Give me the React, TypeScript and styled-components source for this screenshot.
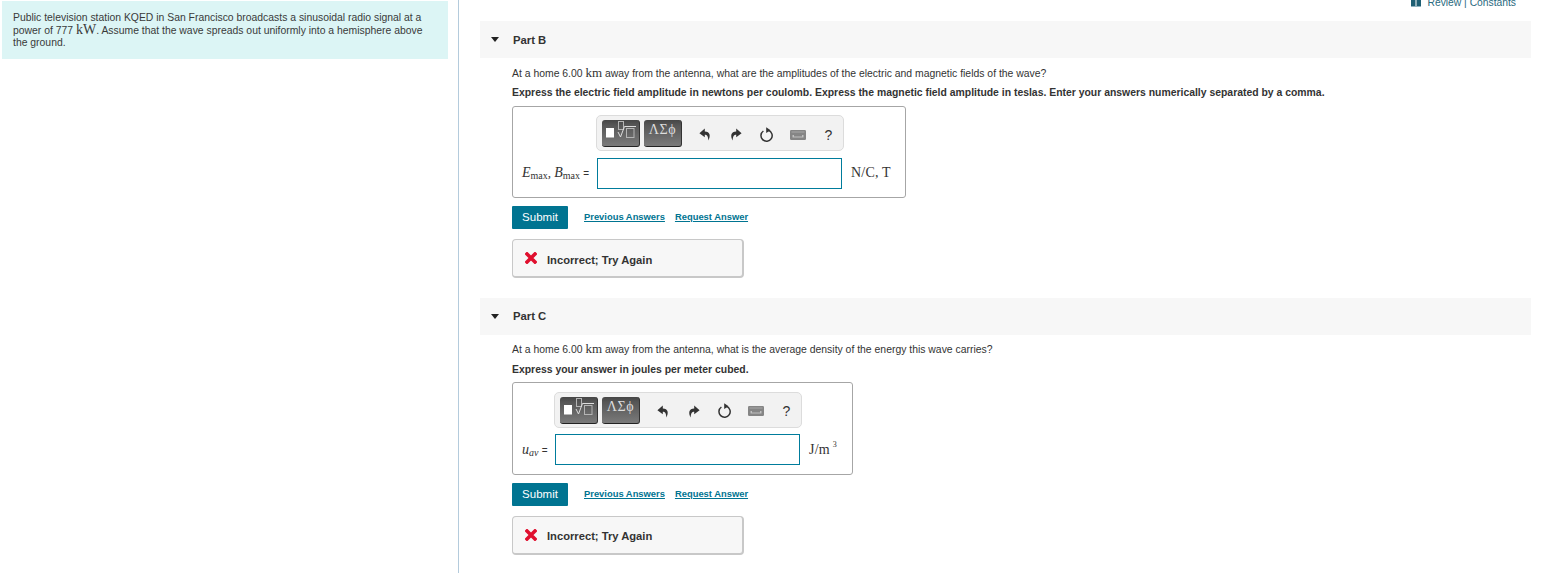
import { createGlobalStyle } from "styled-components";
import styled from "styled-components";

const GlobalStyle = createGlobalStyle`
  html, body {
    margin: 0;
    padding: 0;
    height: 573px;
    overflow: hidden;
    background: #fff;
  }
  body {
    font-family: "Liberation Sans", Arial, sans-serif;
    color: #333;
  }
`;

function UndoIcon() {
  return (
    <svg width="12" height="13" viewBox="0 0 12 13">
      <path d="M5.8 0.6 L0.4 5.2 L5.8 9.2 V6.8 C7.8 6.8 9 7.8 9.4 12.4 C11.8 8 11.2 3.6 5.8 3.5 Z" fill="#333" />
    </svg>
  );
}

function RedoIcon() {
  return (
    <svg width="12" height="13" viewBox="0 0 12 13">
      <path d="M6.2 0.6 L11.6 5.2 L6.2 9.2 V6.8 C4.2 6.8 3 7.8 2.6 12.4 C0.2 8 0.8 3.6 6.2 3.5 Z" fill="#333" />
    </svg>
  );
}

function ResetIcon() {
  return (
    <svg width="14" height="16" viewBox="0 0 14 16">
      <path d="M8.6 3.4 A5.6 5.6 0 1 1 3.4 4" fill="none" stroke="#333" strokeWidth="1.5" />
      <path d="M6.2 0.2 L10.6 3.3 L6.2 6 Z" fill="#333" />
    </svg>
  );
}

function KeyboardIcon() {
  return (
    <svg width="16" height="10" viewBox="0 0 16 10">
      <rect x="0" y="0" width="16" height="10" rx="1.2" fill="#858585" />
      <rect x="1.5" y="1.5" width="13" height="1" fill="#a8a8a8" />
      <rect x="4" y="6.5" width="8" height="1" fill="#c0c0c0" />
      <rect x="2.5" y="5" width="1.5" height="2.5" fill="#c0c0c0" />
      <rect x="12" y="5" width="1.5" height="2.5" fill="#c0c0c0" />
    </svg>
  );
}

function TemplateIcon() {
  return (
    <svg width="32" height="24" viewBox="0 0 32 24">
      <rect x="1" y="8" width="8" height="9.5" fill="#fff" />
      <rect x="13.5" y="1.5" width="5" height="8" fill="none" stroke="#b4b4b4" strokeWidth="1" />
      <path d="M13 12 L15.5 17 L19.5 6.5 H31" fill="none" stroke="#ddd" strokeWidth="1" />
      <rect x="21.5" y="8.5" width="7.5" height="9" fill="none" stroke="#b4b4b4" strokeWidth="1" />
    </svg>
  );
}

function BookIcon() {
  return (
    <svg width="10" height="7" viewBox="0 0 10 7">
      <rect x="0" y="0" width="4.5" height="6" fill="#1f5f73" />
      <rect x="5.5" y="0" width="4.5" height="6" fill="#1f5f73" />
      <rect x="0" y="6" width="10" height="1" fill="#8fb2bf" />
    </svg>
  );
}

function CrossIcon() {
  return (
    <svg width="12" height="12" viewBox="0 0 12 12">
      <path d="M2 2 L10 10 M10 2 L2 10" stroke="#e0102f" strokeWidth="3.6" strokeLinecap="square" />
    </svg>
  );
}

type PartProps = {
  name: string;
  question: React.ReactNode;
  instruction: string;
  label: React.ReactNode;
  unit: React.ReactNode;
  labelWidth: number;
};

function Part({ name, question, instruction, label, unit, labelWidth }: PartProps) {
  return (
    <PartSection>
      <PartHeader>
        <Caret />
        <PartTitle>{name}</PartTitle>
      </PartHeader>
      <PartBody>
        <Question>{question}</Question>
        <Instruction>{instruction}</Instruction>
        <AnswerBox $labelWidth={labelWidth}>
          <Toolbar>
            <ToolButton>
              <TemplateIcon />
            </ToolButton>
            <ToolButton>
              <Greek>ΛΣϕ</Greek>
            </ToolButton>
            <ToolIcons>
              <IconSlot><UndoIcon /></IconSlot>
              <IconSlot><RedoIcon /></IconSlot>
              <IconSlot><ResetIcon /></IconSlot>
              <IconSlot><KeyboardIcon /></IconSlot>
              <IconSlot><Help>?</Help></IconSlot>
            </ToolIcons>
          </Toolbar>
          <AnswerLabel>{label}</AnswerLabel>
          <AnswerInput />
          <Unit>{unit}</Unit>
        </AnswerBox>
        <Actions>
          <SubmitButton>Submit</SubmitButton>
          <ActionLink>Previous Answers</ActionLink>
          <ActionLink>Request Answer</ActionLink>
        </Actions>
        <Feedback>
          <CrossIcon />
          <span>Incorrect; Try Again</span>
        </Feedback>
      </PartBody>
    </PartSection>
  );
}

export default function App() {
  return (
    <>
      <GlobalStyle />
      <Page>
        <Sidebar>
          <Intro>
            Public television station KQED in San Francisco broadcasts a sinusoidal radio signal at a power of 777{" "}
            <IntroMath>kW</IntroMath>. Assume that the wave spreads out uniformly into a hemisphere above the ground.
          </Intro>
        </Sidebar>
        <Main>
          <TopLinks>
            <BookIcon />
            <span>Review | Constants</span>
          </TopLinks>
          <Part
            name="Part B"
            question={
              <>
                At a home 6.00 <MathText>km</MathText> away from the antenna, what are the amplitudes of the electric and magnetic fields of the wave?
              </>
            }
            instruction="Express the electric field amplitude in newtons per coulomb. Express the magnetic field amplitude in teslas. Enter your answers numerically separated by a comma."
            labelWidth={67}
            label={
              <>
                <Var>E</Var><Sub>max</Sub>, <Var>B</Var><Sub>max</Sub> <Eq>=</Eq>
              </>
            }
            unit="N/C, T"
          />
          <Part
            name="Part C"
            question={
              <>
                At a home 6.00 <MathText>km</MathText> away from the antenna, what is the average density of the energy this wave carries?
              </>
            }
            instruction="Express your answer in joules per meter cubed."
            labelWidth={25}
            label={
              <>
                <Var>u</Var><Sub $italic>av</Sub> <Eq>=</Eq>
              </>
            }
            unit={
              <>
                J/m<Sup>3</Sup>
              </>
            }
          />
        </Main>
      </Page>
    </>
  );
}

const Page = styled.div`
  display: flex;
  width: 1563px;
  height: 573px;
  overflow: hidden;
`;

const Sidebar = styled.aside`
  box-sizing: border-box;
  flex: 0 0 459px;
  height: 573px;
  border-right: 1px solid #b4cbdc;
  padding: 1px 10px 0 2px;
`;

const Intro = styled.div`
  box-sizing: border-box;
  height: 58px;
  padding: 11px 20px 0 11px;
  background: #dcf5f5;
  font-size: 10.4px;
  line-height: 12px;
  color: #3a3a3a;
`;

const MathText = styled.span`
  font-family: "Liberation Serif", serif;
  font-size: 13px;
`;

const IntroMath = styled(MathText)`
  font-size: 14px;
`;

const Main = styled.main`
  box-sizing: border-box;
  flex: 0 0 1072px;
  padding-left: 21px;
`;

const TopLinks = styled.div`
  display: flex;
  justify-content: flex-end;
  align-items: flex-start;
  gap: 6px;
  height: 8px;
  margin: 0 15px 13px 0;
  font-size: 10.3px;
  line-height: 8px;
  color: #2a6a80;
  overflow: hidden;

  span {
    margin-top: -1px;
  }
`;

const PartSection = styled.section`
  margin-bottom: 19.2px;
`;

const PartHeader = styled.div`
  display: flex;
  align-items: center;
  height: 37px;
  background: #f7f7f7;
`;

const Caret = styled.span`
  width: 0;
  height: 0;
  margin: 0 14px 0 11px;
  border-left: 4.5px solid transparent;
  border-right: 4.5px solid transparent;
  border-top: 5px solid #222;
`;

const PartTitle = styled.span`
  font-size: 11.3px;
  font-weight: 700;
  color: #333;
`;

const PartBody = styled.div`
  padding-left: 32px;
`;

const Question = styled.div`
  margin-top: 7.8px;
  height: 14px;
  font-size: 10.42px;
  line-height: 14px;
  color: #333;
`;

const Instruction = styled.div`
  margin-top: 6.2px;
  height: 14px;
  font-size: 10.42px;
  font-weight: 700;
  line-height: 14px;
  color: #333;
`;

const AnswerBox = styled.div<{ $labelWidth: number }>`
  box-sizing: border-box;
  display: grid;
  width: fit-content;
  grid-template-columns: ${(p) => p.$labelWidth}px 245px auto;
  column-gap: 8px;
  row-gap: 6.6px;
  align-items: center;
  margin-top: 5.8px;
  padding: 8.4px 14px 8.4px 9px;
  border: 1px solid #a6a6a6;
  border-radius: 3px;
  background: #fff;
`;

const Toolbar = styled.div`
  box-sizing: border-box;
  grid-column: 2 / 4;
  display: flex;
  align-items: center;
  gap: 4px;
  width: 248px;
  height: 36px;
  margin-left: -1px;
  padding-left: 5px;
  background: #f2f2f2;
  border: 1px solid #dcdcdc;
  border-radius: 5px;
`;

const ToolButton = styled.div`
  box-sizing: border-box;
  display: flex;
  justify-content: center;
  flex: 0 0 38px;
  height: 27px;
  margin-top: 1px;
  border-radius: 3px;
  border-bottom: 1px solid #222;
  border-right: 1px solid #333;
  background: linear-gradient(#464646, #565656 20%, #7a7a7a);
`;

const Greek = styled.span`
  font-family: "Liberation Serif", serif;
  font-size: 14px;
  letter-spacing: 0.6px;
  line-height: 19px;
  color: #ddd;
`;

const ToolIcons = styled.div`
  display: flex;
  align-items: center;
  margin: 3px 0 0 3px;
`;

const IconSlot = styled.div`
  display: flex;
  justify-content: center;
  align-items: center;
  width: 31px;
  height: 20px;
`;

const Help = styled.span`
  font-size: 14px;
  color: #333;
`;

const AnswerLabel = styled.div`
  font-family: "Liberation Serif", serif;
  font-size: 13px;
  color: #333;
  white-space: nowrap;
`;

const Var = styled.i`
  font-size: 14px;
`;

const Sub = styled.span<{ $italic?: boolean }>`
  font-size: 10px;
  line-height: 0;
  vertical-align: -1.5px;
  font-style: ${(p) => (p.$italic ? "italic" : "normal")};
`;

const Sup = styled.span`
  margin: 0 1px 0 3px;
  font-size: 8px;
  line-height: 0;
  vertical-align: 7px;
`;

const Eq = styled.span`
  font-family: "Liberation Sans", sans-serif;
  font-size: 10px;
`;

const AnswerInput = styled.div`
  box-sizing: border-box;
  width: 245px;
  height: 31px;
  border: 1px solid #007c9c;
  background: #fff;
`;

const Unit = styled.div`
  font-family: "Liberation Serif", serif;
  font-size: 14px;
  letter-spacing: 0.2px;
  color: #333;
  white-space: nowrap;
  padding-left: 1px;
`;

const Actions = styled.div`
  display: flex;
  align-items: center;
  margin-top: 8.2px;
`;

const SubmitButton = styled.div`
  box-sizing: border-box;
  display: flex;
  align-items: center;
  justify-content: center;
  width: 56px;
  height: 23px;
  margin-right: 16px;
  padding-bottom: 1px;
  border-radius: 1px;
  background: #007491;
  color: #fff;
  font-size: 11.5px;
`;

const ActionLink = styled.a`
  margin: 0 10px 2px 0;
  font-size: 9.4px;
  font-weight: 700;
  color: #007491;
  text-decoration: underline;
`;

const Feedback = styled.div`
  box-sizing: border-box;
  display: flex;
  align-items: center;
  gap: 10px;
  width: 232px;
  height: 39px;
  margin-top: 10px;
  padding-left: 12px;
  background: #f7f7f7;
  border: 1px solid #c8c8c8;
  border-bottom-width: 2px;
  border-right-width: 2px;
  border-radius: 4px;
  font-size: 11.2px;
  font-weight: 700;
  color: #333;

  span {
    padding-top: 3px;
  }
`;
